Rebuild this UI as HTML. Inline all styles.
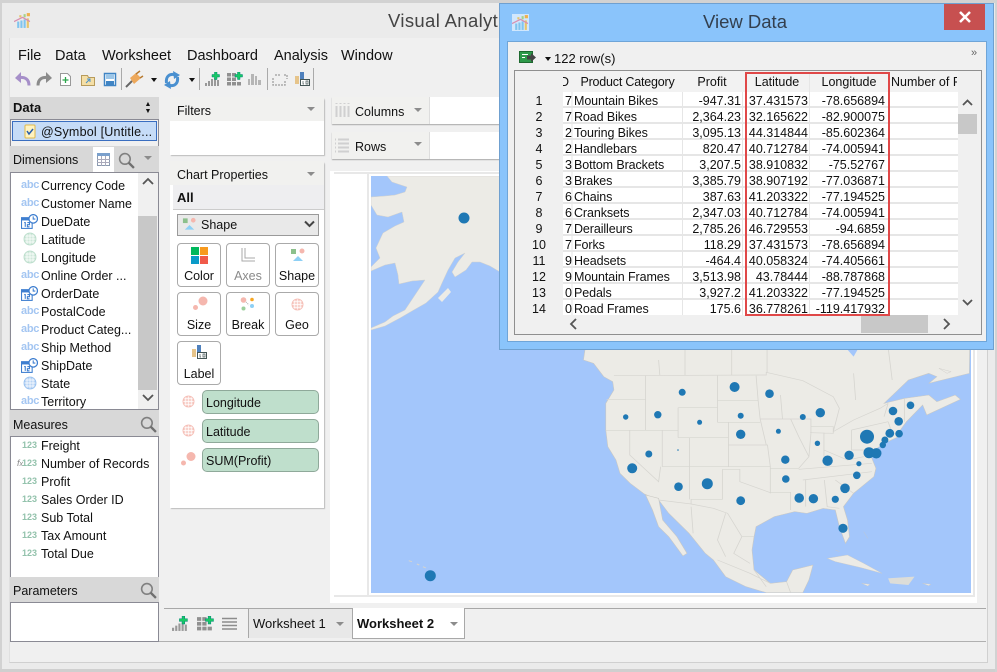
<!DOCTYPE html>
<html><head><meta charset="utf-8"><title>Visual Analytics</title>
<style>
html,body{margin:0;padding:0}
body{width:997px;height:672px;overflow:hidden;position:relative;background:#ebebeb;font-family:"Liberation Sans",sans-serif;font-size:12.5px;color:#111}
div,span,svg{position:absolute;box-sizing:border-box}
.t{white-space:nowrap;line-height:16px}
.c{text-align:center}.r{text-align:right}
.hd{background:#d8d8d8}
.ab{color:#a4c6f2;font-size:11px;left:10px;line-height:14px;font-weight:bold;letter-spacing:-.3px;white-space:nowrap}
.n3{color:#93c2ac;font-size:9px;left:22px;line-height:12px;font-weight:bold;white-space:nowrap}
.btn{width:44px;height:44px;border:1px solid #aaa;border-radius:4px;background:#fff;text-align:center;font-size:12.5px}
.btn span{left:0;right:0;bottom:2px;line-height:16px;text-align:center}
.pill{left:202px;width:117px;height:24px;background:#bfdfcc;border:1px solid #8fa99a;border-radius:5px;line-height:24px;padding-left:3px}
.arr{width:0;height:0;border-left:4px solid transparent;border-right:4px solid transparent;border-top:4px solid #8c8c8c}
.bk{width:0;height:0;border-left:3.5px solid transparent;border-right:3.5px solid transparent;border-top:4px solid #111}
.sep{width:1px;background:#aaa;top:68px;height:22px}
.g{top:0;white-space:nowrap;line-height:16px;font-size:12.5px}
</style></head><body>
<svg width="0" height="0" style="left:0;top:0"><defs>
<symbol id="globe" viewBox="0 0 14 14"><circle cx="7" cy="7" r="6" fill="currentColor" fill-opacity=".5"/><path d="M1 7h12M2 4h10M2 10h10M7 1v12M4 2v10M10 2v10" stroke="#fff" stroke-width=".7" fill="none"/><circle cx="7" cy="7" r="6" fill="none" stroke="currentColor" stroke-opacity=".6"/></symbol>
<symbol id="cal" viewBox="0 0 16 14"><rect x="0.5" y="3.500" width="10" height="10" fill="#fff" stroke="#3f7fd0"/><rect x="0" y="3" width="11" height="3" fill="#3f7fd0"/><path d="M3 8h1v4M6 8h2v2h-2v2h2" stroke="#3f7fd0" fill="none"/><circle cx="11.500" cy="4.500" r="4" fill="#fff" stroke="#3f7fd0" stroke-width="1.200"/><path d="M11.500 2.200v2.500h2" stroke="#3f7fd0" fill="none"/></symbol>
<symbol id="logo" viewBox="0 0 16 16"><g fill="#7fc4ef"><rect x="3" y="9" width="2" height="6"/><rect x="6" y="8" width="2" height="7"/><rect x="9" y="7" width="2" height="8"/></g><rect x="12" y="6" width="2" height="9" fill="#e7c46a"/><rect x="9" y="2" width="2" height="3" fill="#a5d28a"/><rect x="12" y="1" width="3" height="3" fill="#efb04c"/><rect x="5" y="3" width="2" height="2" fill="#e7c46a"/><path d="M0 9 8 5l7 4" stroke="#d88fb0" stroke-width="1.200" fill="none"/></symbol>
<symbol id="sz" viewBox="0 0 16 14"><circle cx="11" cy="5" r="4.500" fill="#f5b7ae"/><circle cx="3.500" cy="11.500" r="2.500" fill="#f5b7ae"/></symbol>
<symbol id="shp" viewBox="0 0 16 14"><rect x="1" y="1" width="5" height="5" fill="#8cc08c"/><circle cx="12" cy="3" r="2.500" fill="#f5b7ae"/><path d="M3 13 8 8l5 5z" fill="#8ed0f5"/></symbol>
<symbol id="lab" viewBox="0 0 16 14"><rect x="0" y="4" width="4" height="8" fill="#e6c48a"/><rect x="5" y="0" width="4" height="8" fill="#4f81bd"/><rect x="5.500" y="7.500" width="9" height="6" fill="#fff" stroke="#455"/><path d="M8 9v3h1M11 9h2v3h-2z" stroke="#455" fill="none" stroke-width=".7"/></symbol>
<symbol id="mag" viewBox="0 0 16 16"><circle cx="6.500" cy="6.500" r="5" fill="none" stroke="#808080" stroke-width="1.500"/><path d="M10 10l5 5" stroke="#707070" stroke-width="2.200"/></symbol>
<symbol id="bar" viewBox="0 0 16 14"><g fill="#999"><rect x="0" y="11" width="2" height="3"/><rect x="3" y="9" width="2" height="5"/><rect x="6" y="7" width="2" height="7"/><rect x="9" y="6" width="2" height="8"/><rect x="12" y="8" width="2" height="6"/></g><path d="M9.500 0h2.500v2.500h2.500v2.500H12v2.500H9.500V5H7V2.500h2.500z" fill="#17c964" stroke="#087" stroke-width=".5"/></symbol>
<symbol id="mat" viewBox="0 0 16 14"><g fill="#909090"><rect x="0" y="1" width="4" height="3.500"/><rect x="5" y="1" width="4" height="3.500"/><rect x="0" y="5.500" width="4" height="3.500"/><rect x="5" y="5.500" width="4" height="3.500"/><rect x="0" y="10" width="4" height="3.500"/><rect x="5" y="10" width="4" height="3.500"/><rect x="10" y="10" width="4" height="3.500"/></g><path d="M10.500 0h2.500v2.500h2.500v2.500H13v2.500h-2.500V5H8V2.500h2.500z" fill="#17c964" stroke="#087" stroke-width=".5"/></symbol>
</defs></svg>

<!-- window -->
<div style="left:0;top:0;width:997px;height:3px;background:#d2d2d2"></div>
<div style="left:0;top:0;width:2px;height:672px;background:#d2d2d2"></div>
<div style="left:0;top:669px;width:997px;height:3px;background:#cfcfcf"></div>
<div style="left:995px;top:0;width:2px;height:672px;background:#d2d2d2"></div>
<svg style="left:14px;top:12px" width="17" height="17"><use href="#logo"/></svg>
<div class="t" style="left:388px;top:10px;font-size:18.5px;letter-spacing:.35px;line-height:22px;color:#444">Visual Analytics</div>

<!-- client area -->
<div style="left:9px;top:38px;width:979px;height:625px;background:#f0f0f0;border-right:1px solid #d0d0d0;border-bottom:1px solid #d0d0d0;border-left:1px solid #e0e0e0"></div>

<!-- menu -->
<div class="t" style="left:18px;top:48px;font-size:14.5px">File</div>
<div class="t" style="left:55px;top:48px;font-size:14.5px">Data</div>
<div class="t" style="left:102px;top:48px;font-size:14.5px">Worksheet</div>
<div class="t" style="left:187px;top:48px;font-size:14.5px">Dashboard</div>
<div class="t" style="left:274px;top:48px;font-size:14.5px">Analysis</div>
<div class="t" style="left:341px;top:48px;font-size:14.5px">Window</div>

<!-- toolbar -->
<svg style="left:14px;top:70px" width="320" height="20" viewBox="14 70 320 20">
<path d="M29 85.500C29 79 25 77 19 77.500" fill="none" stroke="#a68fc9" stroke-width="3"/><path d="M21 72 15 78 21 83z" fill="#a68fc9"/>
<path d="M38 85.500C38 79 42 77 48 77.500" fill="none" stroke="#8b8b8b" stroke-width="3"/><path d="M46 72 52 78 46 83z" fill="#8b8b8b"/>
<path d="M60.500 73.500h7l3 3v9h-10z" fill="#fff" stroke="#999"/><path d="M65.500 77v6M62.500 80h6" stroke="#2aa54a" stroke-width="1.300"/>
<path d="M81.500 75.500h6l1 2h6v8h-13z" fill="#f5dfa6" stroke="#b79b5b"/><path d="M86 83l4-4M87 79h3v3" stroke="#4a90c8" fill="none"/>
<path d="M104.500 73.500h11v12h-11z" fill="#fff" stroke="#3f84c4" stroke-width="1.500"/><rect x="106" y="74" width="8" height="5" fill="#9cc6e8"/><rect x="106" y="81" width="8" height="4" fill="#3f84c4"/>
<path d="M126 87 132 81" stroke="#666" stroke-width="2"/><path d="M130 78 136 73 141 78 134 84z" fill="#eda85b"/><path d="M136 74l4-3M140 78l3-2" stroke="#b87a30" stroke-width="1.500"/>
<path d="M176 75C170 73 165.500 76 166.500 83" fill="none" stroke="#4a90d0" stroke-width="3"/><path d="M173 71l7 4-6 4z" fill="#4a90d0"/>
<path d="M168 85C174 87 178.500 84 177.500 77" fill="none" stroke="#4a90d0" stroke-width="3"/><path d="M171 89l-7-4 6-4z" fill="#4a90d0"/>
<use href="#bar" x="205" y="72" width="16" height="14" />
<use href="#mat" x="227" y="72" width="16" height="14"/>
<g fill="#b5b5b5"><rect x="248" y="79" width="2" height="6"/><rect x="251" y="74" width="3" height="11"/><rect x="255" y="76" width="2" height="9"/><rect x="258" y="80" width="3" height="5"/></g>
<path d="M275 75h5M284 75h3v4M273 78v7h12v-4" stroke="#aaa" fill="none" stroke-dasharray="2 1" stroke-width="1.500"/>
<use href="#lab" x="295" y="72" width="16" height="14"/>
</svg>
<div class="sep" style="left:121px"></div><div class="sep" style="left:199px"></div><div class="sep" style="left:267px"></div><div class="sep" style="left:313px"></div>
<div class="bk" style="left:151px;top:78px"></div><div class="bk" style="left:189px;top:78px"></div>

<!-- data panel -->
<div class="hd" style="left:10px;top:97px;width:149px;height:23px"></div>
<div class="t" style="left:13px;top:100px;font-weight:bold;font-size:13px">Data</div>
<div class="t" style="left:144px;top:101px;font-size:7px;line-height:7px;width:8px;text-align:center">▲</div>
<div class="t" style="left:144px;top:108px;font-size:7px;line-height:7px;width:8px;text-align:center">▼</div>
<div style="left:10px;top:119px;width:149px;height:28px;border:1px solid #8a8a94;background:#f0f0f0"></div>
<div style="left:12px;top:121px;width:145px;height:20px;background:#c6dcf7;border:1px solid #3a6ec0"></div>
<svg style="left:24px;top:124px" width="12" height="15"><rect x="1" y="1" width="10" height="13" rx="1" fill="#fff3c0" stroke="#e0b94a"/><path d="M3 7l2 3 4-5" stroke="#2a5ea8" stroke-width="1.500" fill="none"/></svg>
<div class="t" style="left:41px;top:124px;letter-spacing:.22px">@Symbol [Untitle...</div>

<div class="hd" style="left:10px;top:146px;width:149px;height:26px"></div>
<div class="t" style="left:13px;top:152px">Dimensions</div>
<div style="left:93px;top:147px;width:21px;height:25px;background:#fff"></div>
<svg style="left:97px;top:153px" width="13" height="13"><rect x=".5" y=".5" width="12" height="12" fill="#fff" stroke="#8a9ab0"/><rect x="0" y="0" width="13" height="3" fill="#7aa0cc"/><path d="M0 6.500h13M0 9.500h13M4.500 3v10M8.500 3v10" stroke="#aab"/></svg>
<svg style="left:118px;top:152px" width="17" height="17"><use href="#mag"/></svg>
<div class="arr" style="left:144px;top:156px"></div>
<div style="left:10px;top:172px;width:149px;height:238px;background:#fff;border:1px solid #8a8a94"></div>
<div style="left:138px;top:173px;width:20px;height:236px;background:#f0f0f0"></div>
<div style="left:138px;top:216px;width:19px;height:174px;background:#c8c8c8"></div>
<svg style="left:138px;top:173px" width="20" height="236"><path d="M5 11l5-5 5 5" stroke="#555" stroke-width="1.800" fill="none"/><path d="M5 222l5 5 5-5" stroke="#555" stroke-width="1.800" fill="none"/></svg>
<div style="left:11px;top:174px;width:127px;height:235px;overflow:hidden">
<div class="ab" style="top:4px">abc</div><div class="t" style="left:30px;top:4px">Currency Code</div>
<div class="ab" style="top:22px">abc</div><div class="t" style="left:30px;top:22px">Customer Name</div>
<svg style="left:10px;top:40px" width="17" height="15"><use href="#cal"/></svg><div class="t" style="left:30px;top:40px">DueDate</div>
<svg style="left:12px;top:58px;color:#9fd0b5" width="14" height="14"><use href="#globe"/></svg><div class="t" style="left:30px;top:58px">Latitude</div>
<svg style="left:12px;top:76px;color:#9fd0b5" width="14" height="14"><use href="#globe"/></svg><div class="t" style="left:30px;top:76px">Longitude</div>
<div class="ab" style="top:94px">abc</div><div class="t" style="left:30px;top:94px">Online Order ...</div>
<svg style="left:10px;top:112px" width="17" height="15"><use href="#cal"/></svg><div class="t" style="left:30px;top:112px">OrderDate</div>
<div class="ab" style="top:130px">abc</div><div class="t" style="left:30px;top:130px">PostalCode</div>
<div class="ab" style="top:148px">abc</div><div class="t" style="left:30px;top:148px">Product Categ...</div>
<div class="ab" style="top:166px">abc</div><div class="t" style="left:30px;top:166px">Ship Method</div>
<svg style="left:10px;top:184px" width="17" height="15"><use href="#cal"/></svg><div class="t" style="left:30px;top:184px">ShipDate</div>
<svg style="left:12px;top:202px;color:#6fa8ea" width="14" height="14"><use href="#globe"/></svg><div class="t" style="left:30px;top:202px">State</div>
<div class="ab" style="top:220px">abc</div><div class="t" style="left:30px;top:220px">Territory</div>
</div>

<div class="hd" style="left:10px;top:410px;width:149px;height:26px"></div>
<div class="t" style="left:13px;top:417px">Measures</div>
<svg style="left:140px;top:416px" width="17" height="17"><use href="#mag"/></svg>
<div style="left:10px;top:436px;width:149px;height:142px;background:#fff;border:1px solid #8a8a94"></div>
<div class="n3" style="top:439px">123</div><div class="t" style="left:41px;top:438px">Freight</div>
<div class="t" style="left:17px;top:455px;font-size:9px;font-style:italic;color:#888">f<span style="position:static;font-size:7px">x</span></div>
<div class="n3" style="top:457px">123</div><div class="t" style="left:41px;top:456px">Number of Records</div>
<div class="n3" style="top:475px">123</div><div class="t" style="left:41px;top:474px">Profit</div>
<div class="n3" style="top:493px">123</div><div class="t" style="left:41px;top:492px">Sales Order ID</div>
<div class="n3" style="top:511px">123</div><div class="t" style="left:41px;top:510px">Sub Total</div>
<div class="n3" style="top:529px">123</div><div class="t" style="left:41px;top:528px">Tax Amount</div>
<div class="n3" style="top:547px">123</div><div class="t" style="left:41px;top:546px">Total Due</div>

<div class="hd" style="left:10px;top:577px;width:149px;height:25px"></div>
<div class="t" style="left:13px;top:583px">Parameters</div>
<svg style="left:140px;top:582px" width="17" height="17"><use href="#mag"/></svg>
<div style="left:10px;top:602px;width:149px;height:40px;background:#fff;border:1px solid #8a8a94"></div>
<div style="left:159px;top:641px;width:827px;height:1px;background:#b0b0b0"></div>

<!-- filters -->
<div style="left:170px;top:97px;width:154px;height:58px;background:#fff;border-radius:3px 3px 0 0;box-shadow:1px 1px 1px #bbb"></div>
<div style="left:170px;top:97px;width:154px;height:24px;background:#f1f1ef"></div>
<div class="t" style="left:177px;top:103px">Filters</div>
<div class="arr" style="left:307px;top:107px"></div>

<!-- chart properties -->
<div style="left:170px;top:161px;width:154px;height:347px;background:#fff;border-radius:3px 3px 0 0;box-shadow:1px 1px 1px #bbb"></div>
<div style="left:170px;top:161px;width:154px;height:24px;background:#f1f1ef"></div>
<div class="t" style="left:177px;top:167px">Chart Properties</div>
<div class="arr" style="left:307px;top:172px"></div>
<div style="left:173px;top:185px;width:151px;height:25px;background:#eeeef0;border-bottom:1px solid #ccc"></div>
<div class="t" style="left:177px;top:190px;font-weight:bold;font-size:13px">All</div>
<div style="left:177px;top:214px;width:142px;height:22px;background:#e9e9e9;border:1px solid #9a9a9a"></div>
<svg style="left:182px;top:217px" width="15" height="14"><use href="#shp"/></svg>
<div class="t" style="left:201px;top:217px">Shape</div>
<svg style="left:304px;top:220px" width="11" height="9"><path d="M1 1.500l4.500 4.500 4.500-4.500" stroke="#444" stroke-width="2" fill="none"/></svg>

<div class="btn" style="left:177px;top:243px"><svg style="left:13px;top:3px" width="17" height="17"><rect width="8" height="8" fill="#00b85c"/><rect x="9" width="8" height="8" fill="#f79a1e"/><rect y="9" width="8" height="8" fill="#0a9bc8"/><rect x="9" y="9" width="8" height="8" fill="#f05a4a"/></svg><span>Color</span></div>
<div class="btn" style="left:226px;top:243px;color:#8a8a8a"><svg style="left:14px;top:4px" width="15" height="15"><path d="M1 0v13h13M4 0v10h10" stroke="#aaa" fill="none"/></svg><span>Axes</span></div>
<div class="btn" style="left:275px;top:243px"><svg style="left:14px;top:4px" width="16" height="14"><use href="#shp"/></svg><span>Shape</span></div>
<div class="btn" style="left:177px;top:292px"><svg style="left:14px;top:3px" width="16" height="14"><use href="#sz"/></svg><span>Size</span></div>
<div class="btn" style="left:226px;top:292px"><svg style="left:13px;top:4px" width="16" height="14"><circle cx="3.500" cy="3" r="2.800" fill="#f5b7ae"/><circle cx="12" cy="2.500" r="1.800" fill="#f6a623"/><circle cx="12" cy="9" r="2" fill="#8ed0f5"/><circle cx="3.500" cy="11.500" r="2" fill="#9ccf9c"/><path d="M6 5l3 3" stroke="#aaa" stroke-dasharray="1 1"/></svg><span>Break</span></div>
<div class="btn" style="left:275px;top:292px"><svg style="left:15px;top:5px;color:#f2a59a" width="13" height="13"><use href="#globe"/></svg><span>Geo</span></div>
<div class="btn" style="left:177px;top:341px"><svg style="left:14px;top:3px" width="16" height="14"><use href="#lab"/></svg><span>Label</span></div>

<svg style="left:182px;top:395px;color:#f2a59a" width="13" height="13"><use href="#globe"/></svg>
<div class="pill" style="top:390px">Longitude</div>
<svg style="left:182px;top:424px;color:#f2a59a" width="13" height="13"><use href="#globe"/></svg>
<div class="pill" style="top:419px">Latitude</div>
<svg style="left:180px;top:451px" width="16" height="15"><use href="#sz"/></svg>
<div class="pill" style="top:448px">SUM(Profit)</div>

<!-- shelves -->
<div style="left:332px;top:97px;width:168px;height:27px;background:#fff;box-shadow:0 1px 1px #aaa"></div>
<div style="left:332px;top:97px;width:98px;height:27px;background:#f1f1ef;border-right:1px solid #ddd"></div>
<svg style="left:335px;top:103px" width="16" height="15"><path d="M1.500 0v1M1.500 3v11M5.500 0v1M5.500 3v11M9.500 0v1M9.500 3v11M13.500 0v1M13.500 3v11" stroke="#d0d0d0" stroke-width="2"/></svg>
<div class="t" style="left:355px;top:104px">Columns</div>
<div class="arr" style="left:414px;top:108px"></div>
<div style="left:332px;top:132px;width:168px;height:27px;background:#fff;box-shadow:0 1px 1px #aaa"></div>
<div style="left:332px;top:132px;width:98px;height:27px;background:#f1f1ef;border-right:1px solid #ddd"></div>
<svg style="left:335px;top:138px" width="16" height="15"><path d="M0 1.500h1M3 1.500h11M0 5.500h1M3 5.500h11M0 9.500h1M3 9.500h11M0 13.500h1M3 13.500h11" stroke="#d0d0d0" stroke-width="2"/></svg>
<div class="t" style="left:355px;top:139px">Rows</div>
<div class="arr" style="left:414px;top:142px"></div>

<!-- map container -->
<div style="left:330px;top:171px;width:647px;height:432px;background:#fff"></div>
<div style="left:334px;top:172px;width:640px;height:2px;background:#e8e8e8"></div>
<div style="left:334px;top:595px;width:640px;height:2px;background:#e8e8e8"></div>
<div style="left:367px;top:174px;width:2px;height:421px;background:#e8e8e8"></div>
<div style="left:973px;top:174px;width:2px;height:423px;background:#e8e8e8"></div>

<svg style="left:371px;top:176px" width="600" height="417" viewBox="371 176 600 417">
<rect x="371" y="176" width="600" height="417" fill="#a3c6fb"/>
<!-- Alaska -->
<path d="M387 176 392 182 407 187 405 192 395 195 385 196 371 197V205L377 215 388 217 402 212 404 222 395 226 383 233 376 248 380 258 371 267V271L385 265 395 263 398 275 399 284 412 281 425 280 415 295 405 310 393 316 385 322 371 328V330L385 326 400 318 412 311 426 303 438 292 442 283 448 270 455 258 465 253 458 262 452 272 455 277 466 270 472 262 480 262 490 266 500 272V176Z" fill="#ecebe6" stroke="#d2d1cc" stroke-width=".5"/>
<path d="M438 298 448 288 451 292 442 302Z" fill="#ecebe6"/>
<g transform="translate(360 340) scale(.40625 .33333)">
<!-- mainland -->
<path d="M350 -100 555 20 550 60 575 70 600 110 622 125 625 150 605 190 605 270 610 320 630 360 640 400 665 430 700 462 735 480 760 520 810 580 850 640 870 660 900 710 950 740 1000 758 1090 758 1105 720 1115 675 1065 690 1050 725 1010 730 970 690 965 630 970 590 975 560 1020 530 1070 515 1100 520 1140 505 1170 510 1180 560 1195 610 1205 590 1200 540 1190 500 1215 460 1265 410 1270 385 1255 340 1290 310 1335 285 1330 270 1345 245 1385 195 1395 225 1478 178 1465 165 1420 185 1400 165 1340 175 1290 190 1350 120 1400 100 1420 110 1400 130 1500 100 1502 -100Z" fill="#ecebe6" stroke="#c9c8c3" stroke-width="1.500"/>
<!-- Baja -->
<path d="M703 465 735 475 745 540 780 590 805 640 795 648 760 590 735 560 720 510Z" fill="#ecebe6" stroke="#c9c8c3" stroke-width="1.500"/>
<path d="M1195 22 1228 22 1215 50Z" fill="#a3c6fb"/>
<!-- islands -->
<path d="M1150 655 1200 645 1240 670 1285 700 1230 682 1170 665Z" fill="#ecebe6" stroke="#c9c8c3"/>
<path d="M1300 715 1365 710 1350 735 1305 730Z" fill="#ddddd8"/>
<path d="M1235 730 1255 733 1250 738ZM1385 730 1405 733 1400 737ZM1425 85 1455 95 1445 100ZM1170 630 1180 635M1240 575 1250 595" fill="#ecebe6" stroke="#c9c8c3"/>
<path d="M155 680 162 684M120 662 128 665M140 672 146 675" stroke="#d5d4cf" stroke-width="3"/>
<!-- borders -->
<g fill="none" stroke="#d6d5d0" stroke-width="2">
<path d="M625 107 1000 105V97L1090 122 1165 170 1180 205 1165 275 1215 240 1280 205 1300 190"/>
<path d="M800 22V105M915 22V105M1002 22V97M735 60 738 105M1215 100 1220 180M1300 22 1310 120"/>
<path d="M607 178H703M703 107V270M605 271H783M664 271V345L735 425 740 380M744 271V380M744 380H1010V460M783 203V293M783 203H880M811 293V478M880 107V247M880 181H980M880 247H985M907 247V380M783 293H907M907 315H1003L1010 380"/>
<path d="M975 107 980 181 985 237 1000 315M985 237H1060L1080 290 1105 350 1080 385 1010 385M1035 165 1040 237M1060 237H1110L1110 280 1105 350M1110 260H1165L1165 280 1108 278M1142 278V350M1210 270V330 H1255M1142 330 1200 360 1240 350M1080 388 1260 370M1090 420 1260 395M1010 457H1060L1060 510M1097 420V500M1143 420 1150 500 1180 505M1170 420 1215 460"/>
<path d="M735 480 815 492 815 478H892V388M892 388 935 388 935 425 1010 458M1300 245 1310 280M1340 175 1340 245M1210 270 1300 245M1290 230 1300 190"/>
<path d="M815 492 870 505 905 520 940 590 970 590M820 580 815 500M900 520 880 600 900 650M940 590 920 640 960 670M880 660 960 700 1010 730M970 690 1000 740M1050 725 1060 758"/>
</g></g>
<!-- dots -->
<g fill="#1f78b4">
<circle cx="430.300" cy="575.700" r="5.500"/><circle cx="625.700" cy="417" r="2.700"/><circle cx="657.800" cy="414.700" r="3.700"/><circle cx="682.200" cy="392.300" r="3.500"/><circle cx="734.600" cy="387" r="5"/><circle cx="769.500" cy="393.700" r="4.300"/><circle cx="740.700" cy="415.700" r="3"/><circle cx="699.600" cy="422.300" r="2.500"/><circle cx="740.700" cy="434.300" r="4.700"/><circle cx="778.400" cy="431.300" r="2.500"/><circle cx="802.800" cy="417" r="3"/><circle cx="820.300" cy="412.700" r="4.700"/><circle cx="817.400" cy="443.300" r="2.700"/><circle cx="867" cy="436.700" r="7"/><circle cx="893" cy="411" r="4.300"/><circle cx="910.500" cy="405.300" r="3.800"/><circle cx="898.700" cy="421.300" r="4.300"/><circle cx="899.100" cy="433.700" r="3.800"/><circle cx="889.800" cy="433.300" r="4.400"/><circle cx="884.900" cy="440" r="3.500"/><circle cx="882.800" cy="445" r="3.200"/><circle cx="869" cy="452.700" r="5.500"/><circle cx="876.300" cy="453.300" r="5.200"/><circle cx="849.100" cy="455.300" r="4.700"/><circle cx="827.600" cy="460.700" r="5.200"/><circle cx="858.900" cy="463.700" r="2.600"/><circle cx="856.800" cy="475.300" r="3.800"/><circle cx="845" cy="488.300" r="4.800"/><circle cx="835.300" cy="499.300" r="3.600"/><circle cx="843" cy="528.300" r="4.600"/><circle cx="813.400" cy="498.700" r="4.700"/><circle cx="799.200" cy="498" r="4.800"/><circle cx="785.300" cy="459.700" r="4.200"/><circle cx="785.800" cy="479" r="3.800"/><circle cx="740.700" cy="500.700" r="4.400"/><circle cx="707.300" cy="483.700" r="5.500"/><circle cx="678.500" cy="486.700" r="4.300"/><circle cx="648.800" cy="454" r="3.500"/><circle cx="632.200" cy="468.300" r="5"/><circle cx="678" cy="450" r=".8"/>
<circle cx="464" cy="218" r="5.500"/>
</g>
</svg>

<!-- tabs -->
<div style="left:164px;top:608px;width:822px;height:1px;background:#a8a8a8"></div>
<svg style="left:172px;top:616px" width="17" height="15"><use href="#bar"/></svg>
<svg style="left:197px;top:616px" width="17" height="15"><use href="#mat"/></svg>
<svg style="left:222px;top:617px" width="15" height="13"><path d="M0 1.500h15M0 5h15M0 8.500h15M0 12h15" stroke="#8c8c8c" stroke-width="1.600"/></svg>
<div style="left:248px;top:609px;width:104px;height:29px;background:#e8e8e8;border-left:1px solid #a8a8a8"></div>
<div class="t" style="left:253px;top:616px;font-size:13px">Worksheet 1</div>
<div class="arr" style="left:336px;top:622px"></div>
<div style="left:352px;top:608px;width:113px;height:31px;background:#fff;border:1px solid #a8a8a8;border-top:0"></div>
<div class="t" style="left:357px;top:616px;font-size:13px;font-weight:bold">Worksheet 2</div>
<div class="arr" style="left:450px;top:622px"></div>

<!-- dialog -->
<div style="left:499px;top:3px;width:495px;height:347px;background:#8ac4fb;border:1px solid #6fa0d0"></div>
<svg style="left:512px;top:14px" width="17" height="17"><rect width="17" height="17" fill="#fff" fill-opacity=".6"/><use href="#logo"/></svg>
<div class="t" style="left:703px;top:11px;font-size:18.5px;line-height:22px;color:#33404f">View Data</div>
<div style="left:944px;top:4px;width:41px;height:26px;background:#c75050"></div>
<svg style="left:958px;top:10px" width="14" height="14"><path d="M2 2l10 10M12 2 2 12" stroke="#fff" stroke-width="2.500"/></svg>
<div style="left:507px;top:41px;width:480px;height:301px;background:#f0f0f0;border:1px solid #6fa5d8"></div>
<svg style="left:519px;top:51px" width="18" height="13"><rect x=".5" y=".5" width="13" height="11" fill="#2e9a4a" stroke="#1e6a30"/><path d="M3 3.500h6M3 6.500h3" stroke="#fff"/><path d="M8 4.500h4V2l5 4.500-5 4.500V8.500H8z" fill="#444"/></svg>
<div class="bk" style="left:545px;top:57px"></div>
<div class="t" style="left:554px;top:51px;font-size:13px">122 row(s)</div>
<div class="t" style="left:971px;top:46px;font-size:11px;color:#666;line-height:14px">»</div>
<!-- grid -->
<div style="left:514px;top:70px;width:468px;height:265px;background:#f0f0f0;border:1px solid #8f8f8f"></div>
<div style="left:563px;top:71px;width:395px;height:21px;background:#f2f2f2"></div>
<div class="t" style="left:563px;top:74px;width:6px;overflow:hidden;direction:rtl">D</div>
<div class="t c" style="left:573px;top:74px;width:109px;letter-spacing:-.2px">Product Category</div>
<div class="t c" style="left:683px;top:74px;width:58px">Profit</div>
<div class="t c" style="left:745px;top:74px;width:64px">Latitude</div>
<div class="t c" style="left:810px;top:74px;width:78px">Longitude</div>
<div class="t" style="left:891px;top:74px;width:66px;overflow:hidden">Number of Records</div>
<div style="left:515px;top:92px;width:48px;height:223px;background:#f0f0f0"></div>
<div style="left:563px;top:92px;width:395px;height:223px;background:#fff;overflow:hidden">
<svg style="left:0;top:0" width="395" height="223"><path d="M0 15h395M0 31h395M0 47h395M0 63h395M0 79h395M0 95h395M0 111h395M0 127h395M0 143h395M0 159h395M0 175h395M0 191h395M0 207h395" stroke="#e6e6e6" stroke-width="2"/><path d="M9 0v223M119.500 0v223M179.500 0v223M246.500 0v223" stroke="#e6e6e6"/></svg>
<div class="g r" style="top:1px;width:9px">7</div><div class="g" style="left:11px;top:1px;letter-spacing:-.1px">Mountain Bikes</div><div class="g r" style="left:120px;top:1px;width:58px">-947.31</div><div class="g r" style="left:183px;top:1px;width:62px">37.431573</div><div class="g r" style="left:247px;top:1px;width:75px">-78.656894</div>
<div class="g r" style="top:17px;width:9px">7</div><div class="g" style="left:11px;top:17px;letter-spacing:-.1px">Road Bikes</div><div class="g r" style="left:120px;top:17px;width:58px">2,364.23</div><div class="g r" style="left:183px;top:17px;width:62px">32.165622</div><div class="g r" style="left:247px;top:17px;width:75px">-82.900075</div>
<div class="g r" style="top:33px;width:9px">2</div><div class="g" style="left:11px;top:33px;letter-spacing:-.1px">Touring Bikes</div><div class="g r" style="left:120px;top:33px;width:58px">3,095.13</div><div class="g r" style="left:183px;top:33px;width:62px">44.314844</div><div class="g r" style="left:247px;top:33px;width:75px">-85.602364</div>
<div class="g r" style="top:49px;width:9px">2</div><div class="g" style="left:11px;top:49px;letter-spacing:-.1px">Handlebars</div><div class="g r" style="left:120px;top:49px;width:58px">820.47</div><div class="g r" style="left:183px;top:49px;width:62px">40.712784</div><div class="g r" style="left:247px;top:49px;width:75px">-74.005941</div>
<div class="g r" style="top:65px;width:9px">3</div><div class="g" style="left:11px;top:65px;letter-spacing:-.1px">Bottom Brackets</div><div class="g r" style="left:120px;top:65px;width:58px">3,207.5</div><div class="g r" style="left:183px;top:65px;width:62px">38.910832</div><div class="g r" style="left:247px;top:65px;width:75px">-75.52767</div>
<div class="g r" style="top:81px;width:9px">3</div><div class="g" style="left:11px;top:81px;letter-spacing:-.1px">Brakes</div><div class="g r" style="left:120px;top:81px;width:58px">3,385.79</div><div class="g r" style="left:183px;top:81px;width:62px">38.907192</div><div class="g r" style="left:247px;top:81px;width:75px">-77.036871</div>
<div class="g r" style="top:97px;width:9px">6</div><div class="g" style="left:11px;top:97px;letter-spacing:-.1px">Chains</div><div class="g r" style="left:120px;top:97px;width:58px">387.63</div><div class="g r" style="left:183px;top:97px;width:62px">41.203322</div><div class="g r" style="left:247px;top:97px;width:75px">-77.194525</div>
<div class="g r" style="top:113px;width:9px">6</div><div class="g" style="left:11px;top:113px;letter-spacing:-.1px">Cranksets</div><div class="g r" style="left:120px;top:113px;width:58px">2,347.03</div><div class="g r" style="left:183px;top:113px;width:62px">40.712784</div><div class="g r" style="left:247px;top:113px;width:75px">-74.005941</div>
<div class="g r" style="top:129px;width:9px">7</div><div class="g" style="left:11px;top:129px;letter-spacing:-.1px">Derailleurs</div><div class="g r" style="left:120px;top:129px;width:58px">2,785.26</div><div class="g r" style="left:183px;top:129px;width:62px">46.729553</div><div class="g r" style="left:247px;top:129px;width:75px">-94.6859</div>
<div class="g r" style="top:145px;width:9px">7</div><div class="g" style="left:11px;top:145px;letter-spacing:-.1px">Forks</div><div class="g r" style="left:120px;top:145px;width:58px">118.29</div><div class="g r" style="left:183px;top:145px;width:62px">37.431573</div><div class="g r" style="left:247px;top:145px;width:75px">-78.656894</div>
<div class="g r" style="top:161px;width:9px">9</div><div class="g" style="left:11px;top:161px;letter-spacing:-.1px">Headsets</div><div class="g r" style="left:120px;top:161px;width:58px">-464.4</div><div class="g r" style="left:183px;top:161px;width:62px">40.058324</div><div class="g r" style="left:247px;top:161px;width:75px">-74.405661</div>
<div class="g r" style="top:177px;width:9px">9</div><div class="g" style="left:11px;top:177px;letter-spacing:-.1px">Mountain Frames</div><div class="g r" style="left:120px;top:177px;width:58px">3,513.98</div><div class="g r" style="left:183px;top:177px;width:62px">43.78444</div><div class="g r" style="left:247px;top:177px;width:75px">-88.787868</div>
<div class="g r" style="top:193px;width:9px">0</div><div class="g" style="left:11px;top:193px;letter-spacing:-.1px">Pedals</div><div class="g r" style="left:120px;top:193px;width:58px">3,927.2</div><div class="g r" style="left:183px;top:193px;width:62px">41.203322</div><div class="g r" style="left:247px;top:193px;width:75px">-77.194525</div>
<div class="g r" style="top:209px;width:9px">0</div><div class="g" style="left:11px;top:209px;letter-spacing:-.1px">Road Frames</div><div class="g r" style="left:120px;top:209px;width:58px">175.6</div><div class="g r" style="left:183px;top:209px;width:62px">36.778261</div><div class="g r" style="left:247px;top:209px;width:75px">-119.417932</div>
</div>
<div class="t c" style="left:515px;top:93px;width:48px">1</div><div class="t c" style="left:515px;top:109px;width:48px">2</div><div class="t c" style="left:515px;top:125px;width:48px">3</div><div class="t c" style="left:515px;top:141px;width:48px">4</div><div class="t c" style="left:515px;top:157px;width:48px">5</div><div class="t c" style="left:515px;top:173px;width:48px">6</div><div class="t c" style="left:515px;top:189px;width:48px">7</div><div class="t c" style="left:515px;top:205px;width:48px">8</div><div class="t c" style="left:515px;top:221px;width:48px">9</div><div class="t c" style="left:515px;top:237px;width:48px">10</div><div class="t c" style="left:515px;top:253px;width:48px">11</div><div class="t c" style="left:515px;top:269px;width:48px">12</div><div class="t c" style="left:515px;top:285px;width:48px">13</div><div class="t c" style="left:515px;top:301px;width:48px">14</div>
<!-- scrollbars -->
<div style="left:958px;top:114px;width:19px;height:20px;background:#c8c8c8"></div>
<svg style="left:958px;top:96px" width="19" height="14"><path d="M5 9l4.500-4.500 4.500 4.500" stroke="#555" stroke-width="1.800" fill="none"/></svg>
<svg style="left:958px;top:296px" width="19" height="14"><path d="M5 4l4.500 4.500 4.500-4.500" stroke="#555" stroke-width="1.800" fill="none"/></svg>
<div style="left:861px;top:315px;width:67px;height:18px;background:#c8c8c8"></div>
<svg style="left:566px;top:316px" width="14" height="16"><path d="M10 3 5 8l5 5" stroke="#555" stroke-width="1.800" fill="none"/></svg>
<svg style="left:940px;top:316px" width="14" height="16"><path d="M4 3l5 5-5 5" stroke="#555" stroke-width="1.800" fill="none"/></svg>
<!-- red box -->
<div style="left:745px;top:72px;width:145px;height:244px;border:2px solid #e04848"></div>
<div style="left:809px;top:74px;width:1px;height:18px;background:#e6e6e6"></div>
</body></html>
